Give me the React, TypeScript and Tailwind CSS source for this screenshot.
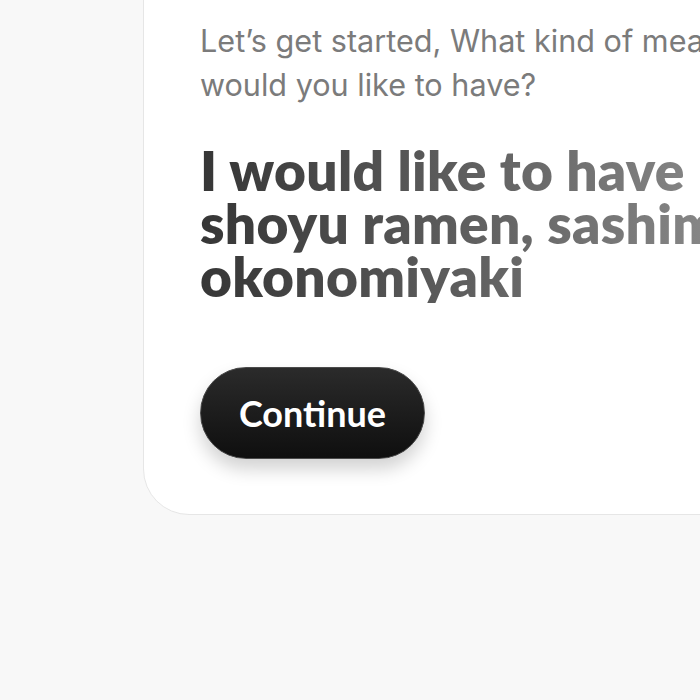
export default function App() {
  return (
    <div className="h-[700px] w-[700px] overflow-hidden bg-[#f8f8f8]">
      <div className="ml-[143px] -mt-[40px] w-[700px] rounded-bl-[46px] border border-[#e6e6e6] bg-white pb-[55px] pl-[56px] pt-[58px]">
        <p className="whitespace-nowrap text-[30.6px] leading-[44px] text-[#7b7b7b] [font-family:Inter,sans-serif]">
          Let’s get started, What kind of meal
          <br />
          would you like to have?
        </p>
        <h1 className="mt-[37px] w-[620px] whitespace-nowrap bg-gradient-to-r from-[#363636] to-[#9a9a9a] bg-clip-text text-[55px] font-extrabold leading-[53px] tracking-[0.3px] text-transparent [font-family:Lato,sans-serif]">
          I would like to have
          <br />
          shoyu ramen, sashimi and
          <br />
          okonomiyaki
        </h1>
        <button className="mt-[64px] h-[92px] w-[225px] rounded-full border border-[#4a4a4a] bg-gradient-to-b from-[#2b2b2b] to-[#0f0f0f] text-[36px] font-bold text-white shadow-[0_10px_18px_rgba(0,0,0,0.18)] [font-family:Lato,sans-serif]">
          Continue
        </button>
      </div>
    </div>
  );
}
